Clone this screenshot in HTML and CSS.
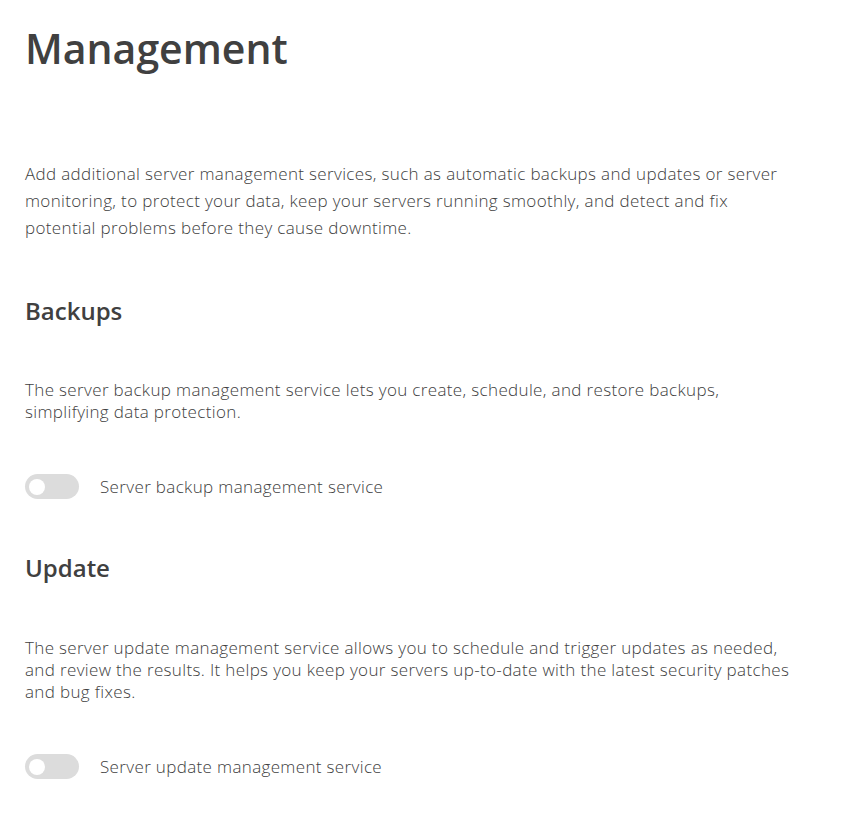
FILE: index.html
```html
<!DOCTYPE html>
<html lang="en">
<head>
<meta charset="utf-8">
<title>Management</title>
<link rel="stylesheet" href="styles.css">
</head>
<body>
<main class="page">
  <h1 class="title">Management</h1>
  <p class="intro">Add additional server management services, such as automatic backups and updates or server monitoring, to protect your data, keep your servers running smoothly, and detect and fix potential problems before they cause downtime.</p>

  <section class="section">
    <h2 class="section-title">Backups</h2>
    <p class="section-text">The server backup management service lets you create, schedule, and restore backups, simplifying data protection.</p>
    <label class="switch-row">
      <span class="switch"><span class="knob"></span></span>
      <span class="switch-label">Server backup management service</span>
    </label>
  </section>

  <section class="section">
    <h2 class="section-title">Update</h2>
    <p class="section-text section-text-last">The server update management service allows you to schedule and trigger updates as needed, and review the results. It helps you keep your servers up-to-date with the latest security patches and bug fixes.</p>
    <label class="switch-row">
      <span class="switch"><span class="knob"></span></span>
      <span class="switch-label">Server update management service</span>
    </label>
  </section>
</main>
</body>
</html>
```

FILE: styles.css
```css
html, body {
  margin: 0;
  padding: 0;
  background: #fff;
}
body {
  font-family: "Open Sans", Lato, sans-serif;
  color: #4a4a4a;
}
.page {
  padding: 20px 0 0 25px;
  max-width: 770px;
}
.title {
  margin: 0;
  font-size: 41px;
  line-height: 56px;
  font-weight: 600;
  color: #404040;
}
.intro {
  margin: 84px 0 0;
  font-size: 17px;
  line-height: 27px;
  font-weight: 300;
  letter-spacing: 0.35px;
  color: #404040;
}
.section-title {
  margin: 53px 0 0;
  font-size: 24px;
  line-height: 32px;
  font-weight: 600;
  color: #404040;
}
.section:first-of-type .section-title {
  margin-top: 54px;
}
.section-text {
  margin: 52px 0 0;
  font-size: 17px;
  line-height: 22px;
  font-weight: 300;
  letter-spacing: 0.35px;
  color: #404040;
}
.section-text-last {
  margin-top: 53px;
}
.switch-row {
  display: flex;
  align-items: center;
  gap: 21px;
  margin-top: 51px;
}
.switch {
  width: 54px;
  height: 25px;
  border-radius: 13px;
  background: #dcdcdc;
  display: flex;
  align-items: center;
  padding-left: 4px;
  box-sizing: border-box;
}
.knob {
  width: 16px;
  height: 16px;
  border-radius: 50%;
  background: #fff;
}
.switch-label {
  font-size: 17px;
  font-weight: 300;
  letter-spacing: 0.35px;
  color: #404040;
}
```
